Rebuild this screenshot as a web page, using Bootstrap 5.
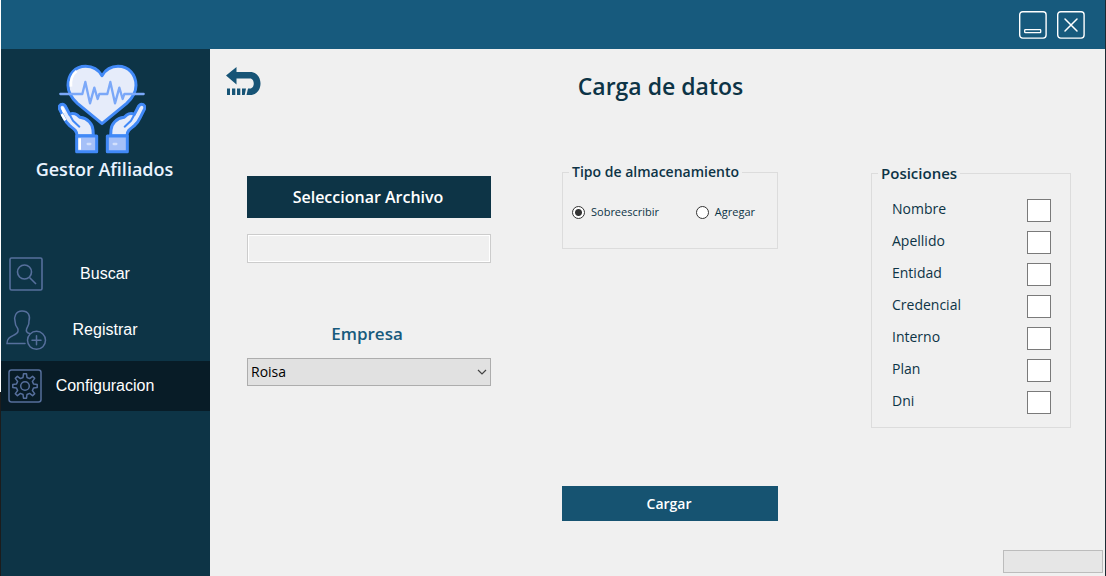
<!DOCTYPE html>
<html lang="es">
<head>
<meta charset="utf-8">
<meta name="viewport" content="width=device-width, initial-scale=1">
<title>Gestor Afiliados</title>
<link rel="stylesheet" href="https://cdn.jsdelivr.net/npm/bootstrap@5.3.0/dist/css/bootstrap.min.css">
<script src="https://cdn.jsdelivr.net/npm/bootstrap@5.3.0/dist/js/bootstrap.bundle.min.js" defer></script>
<style>
  :root { --navy: #0d3446; --blue: #175a7d; --night: #081c27; --panel: #f0f0f0; --line: #566f9c; }
  body { background: linear-gradient(#fff 392px, #1c1c1c 392px); font-family: "Open Sans", "Noto Sans", sans-serif; color: var(--navy); }
  .app { margin-left: 1px; border-right: 1px solid #1c2a33; background: var(--panel); }
  .titlebar { height: 49px; padding-right: 20px; gap: 10px; background: var(--blue); }
  .win-btn { width: 28px; height: 28px; color: #fff; }
  .sidebar { width: 209px; background: var(--navy); }
  .brand { padding: 15px 2px 68px 0; color: #e9f3ff; font-size: 18px; line-height: 24px; font-weight: 600; }
  .brand svg { margin-right: 6px; }
  .brand span { margin-top: 3px; }
  .menu { gap: 6px; font: 16px/24px "Liberation Sans", Arial, sans-serif; }
  .menu-item { height: 50px; padding-right: 1px; color: #fff; text-decoration: none; }
  .menu-item.active { background: var(--night); }
  .menu-item svg { width: 42px; height: 42px; top: 4px; left: 4px; color: var(--line); }
  .top-row { height: 111px; padding: 17px 16px 0; }
  .back-btn { width: 36px; height: 32px; color: #175476; top: 17px; left: 15px; }
  .page-title { font-size: 23px; line-height: 40px; font-weight: 600; padding-left: 6px; }
  .form-area { display: grid; grid-template-columns: minmax(0, 244fr) 71px minmax(0, 216fr) 93px minmax(0, 200fr); padding: 0 34px 0 37px; }
  .col-type { grid-column: 3; }
  .col-pos { grid-column: 5; padding-top: 1px; }
  .col-file { padding-top: 16px; }
  .flat { border: 0; border-radius: 0; color: #fff; font-weight: 600; padding: 0 2px 0 0; }
  .flat:hover { color: #fff; }
  .pick { height: 42px; background: var(--navy); font-size: 16px; }
  .pick:hover { background: var(--night); }
  .load { height: 35px; background: #165371; font-size: 14px; margin-top: 237px; }
  .load:hover { background: var(--blue); }
  .path-box { height: 29px; margin-top: 16px; border: 1px solid #ccc; border-radius: 0; background: var(--panel); box-shadow: inset 0 0 0 1px #fff; }
  .company { margin-top: 59px; font-size: 17px; line-height: 24px; font-weight: 600; color: var(--blue); }
  .company-select { height: 28px; margin-top: 12px; padding: 0 20px 0 3px; border: 1px solid #adadad; border-radius: 0; font-size: 14px; line-height: 26px; color: #000;
    background: #e1e1e1 url("data:image/svg+xml,%3Csvg xmlns='http://www.w3.org/2000/svg' viewBox='0 0 10 6'%3E%3Cpath d='M1 1l4 4 4-4' fill='none' stroke='%23444' stroke-width='1.2'/%3E%3C/svg%3E") no-repeat right 3px center / 10px 6px; }
  .group { border: 1px solid #dcdcdc; padding: 0 10px; margin: 0; }
  .group legend { float: none; width: auto; margin: 0 0 0 -4px; padding: 0 3px; font-size: 14px; line-height: 24px; font-weight: 600; }
  .group .legend-lg { font-size: 15px; }
  .radios { height: 64px; margin-left: -1px; padding: 16px 12px 0 0; font-size: 11px; line-height: 24px; }
  .radios label { gap: 6px; height: 24px; }
  .radios input { appearance: none; width: 13px; height: 13px; margin: 0; border: 1px solid #333; border-radius: 50%; background: #fff; }
  .radios input:checked { background: radial-gradient(circle, #333 3px, #fff 4px); }
  .positions { gap: 9px; padding: 14px 9px 13px 10px; font-size: 14px; line-height: 20px; }
  .positions input { width: 24px; height: 23px; border: 1px solid #7a7a7a; background: #fff; padding: 0 2px; }
  .status { width: 100px; height: 23px; margin: 0 2px 3px 0; border: 1px solid #bcbcbc; border-radius: 0; background: #e6e6e6; }
</style>
</head>
<body>
<div class="app min-vh-100 d-flex flex-column">
  <header class="titlebar d-flex align-items-center justify-content-end">
    <button type="button" class="win-btn btn p-0 border-0 d-flex" aria-label="Minimizar">
      <svg width="28" height="28" viewBox="0 0 28 28" fill="none" stroke="currentColor"><rect x=".7" y=".7" width="26.4" height="26.4" rx="3" stroke-width="1.4"/><rect x="5.700" y="18.700" width="16" height="3" rx=".6" stroke-width="1.3"/></svg>
    </button>
    <button type="button" class="win-btn btn p-0 border-0 d-flex" aria-label="Cerrar">
      <svg width="28" height="28" viewBox="0 0 28 28" fill="none" stroke="currentColor"><rect x=".7" y=".7" width="26.4" height="26.4" rx="3" stroke-width="1.4"/><path d="M8 8l12 12M20 8L8 20" stroke-width="1.5" stroke-linecap="round"/></svg>
    </button>
  </header>
  <div class="d-flex flex-grow-1">
    <aside class="sidebar flex-shrink-0">
      <div class="brand d-flex flex-column align-items-center">
        <svg width="88" height="90" viewBox="174 42 264 270" stroke-linejoin="round" stroke-linecap="round" aria-hidden="true">
          <g stroke="#4189f7" stroke-width="9">
            <path fill="#e6ecfa" d="M306 77C294 57 277 49 257 49C225 49 204 73 204 106C204 128 215 145 232 160L306 221L380 160C397 145 408 128 408 106C408 73 386 49 354 49C334 49 318 57 306 77Z"/>
            <g>
              <path fill="#e6ecfa" d="M231 257C231 242 222 237 210 228C199 219 195 211 191 202L179 178C175 169 180 163 187 163C194 163 196 167 199 174L209 193C219 188 226 191 233 196L240 202C263 205 278 222 279 240L280 257Z"/>
              <path fill="none" stroke-width="6" d="M209 194L219 212L238 230"/>
              <path fill="#a5c0f8" d="M230 258H290V305H230Z"/>
            </g>
            <g transform="matrix(-1 0 0 1 612 0)">
              <path fill="#e6ecfa" d="M231 257C231 242 222 237 210 228C199 219 195 211 191 202L179 178C175 169 180 163 187 163C194 163 196 167 199 174L209 193C219 188 226 191 233 196L240 202C263 205 278 222 279 240L280 257Z"/>
              <path fill="none" stroke-width="6" d="M209 194L219 212L238 230"/>
              <path fill="#a5c0f8" d="M230 258H290V305H230Z"/>
            </g>
          </g>
          <path stroke="#fff" stroke-width="8" fill="none" stroke-linecap="butt" d="M239 265V299M186 172L193 188M185 192L196 211M230 63C216 74 211 91 213 110"/>
          <path stroke="#d3e0fc" stroke-width="7" d="M263 282H271M341 282H349"/>
          <path stroke="#7ba8f8" stroke-width="7" fill="none" d="M181 132H247L256 96L270 160L283 113L293 147L298 132H322L331 96L345 160L358 113L368 147L373 132H431"/>
        </svg>
        <span>Gestor Afiliados</span>
      </div>
      <nav class="menu d-flex flex-column">
        <a href="#" class="menu-item position-relative d-flex align-items-center justify-content-center">
          <svg class="position-absolute" viewBox="0 0 42 42" fill="none" stroke="currentColor" stroke-width="1.600"><rect x="5" y="5" width="32" height="32" rx="1.500"/><circle cx="19.500" cy="19" r="7"/><path d="M24.500 24.500L31 31"/></svg>
          Buscar</a>
        <a href="#" class="menu-item position-relative d-flex align-items-center justify-content-center">
          <svg class="position-absolute" viewBox="0 0 42 42" fill="none" stroke="currentColor" stroke-width="1.500" stroke-linecap="round"><path d="M20 34.500H2C2 29 5 28 10 25.500C13 24 14 22.500 12.700 19.500C10.500 17 10 15 10 12C9 8 10.500 2 17 2C23.500 2 25.500 7 24 12C24.500 15 23 17 21.700 19.500C20.700 22.500 22 24 24.500 24.500"/><circle cx="31.500" cy="31.300" r="9"/><path d="M27 31.300H36M31.500 26.800V35.800"/></svg>
          Registrar</a>
        <a href="#" class="menu-item active position-relative d-flex align-items-center justify-content-center" aria-current="page">
          <svg class="position-absolute" viewBox="0 0 42 42" fill="none" stroke="currentColor" stroke-width="1.500" stroke-linejoin="round"><rect x="4" y="5" width="32" height="32" rx="2.500"/><circle cx="20" cy="21" r="4.300"/><path d="M18 12.500L18.500 8.800H21.500L22 12.500L24.600 13.600L27.600 11.300L29.700 13.400L27.400 16.400L28.500 19L32.200 19.500V22.500L28.500 23L27.400 25.600L29.700 28.600L27.600 30.700L24.600 28.400L22 29.500L21.500 33.200H18.500L18 29.500L15.400 28.400L12.400 30.700L10.300 28.600L12.600 25.600L11.500 23L7.800 22.500V19.500L11.500 19L12.600 16.400L10.300 13.400L12.400 11.300L15.400 13.600Z"/></svg>
          Configuracion</a>
      </nav>
    </aside>
    <main class="flex-grow-1 d-flex flex-column">
      <div class="top-row position-relative text-center">
        <button type="button" class="back-btn btn p-0 border-0 position-absolute d-flex" aria-label="Volver">
          <svg width="36" height="32" viewBox="0 0 36 32"><path fill="currentColor" d="M1 9.500L11.500 1V6H25C39 6 39 29 25 29H21.500L23 22.500H25C30 22.500 30 12.500 25 12.500H11.500V18.500ZM2 22.500H5V29H2ZM7 22.500H10.300V29H7ZM12 22.500H15.300V29H12ZM17 22.500H21L19.700 29H17Z"/></svg>
        </button>
        <h1 class="page-title m-0">Carga de datos</h1>
      </div>
      <form class="form-area" onsubmit="return false">
        <div class="col-file d-flex flex-column">
          <button type="button" class="btn flat pick">Seleccionar Archivo</button>
          <input type="text" class="path-box w-100" aria-label="Archivo seleccionado" readonly>
          <label for="empresa" class="company text-center pe-1">Empresa</label>
          <select id="empresa" class="form-select company-select"><option>Roisa</option></select>
        </div>
        <div class="col-type d-flex flex-column">
          <fieldset class="group">
            <legend>Tipo de almacenamiento</legend>
            <div class="radios d-flex justify-content-between">
              <label class="d-flex align-items-center"><input type="radio" name="modo" checked>Sobreescribir</label>
              <label class="d-flex align-items-center"><input type="radio" name="modo">Agregar</label>
            </div>
          </fieldset>
          <button type="submit" class="btn flat load">Cargar</button>
        </div>
        <div class="col-pos">
          <fieldset class="group">
            <legend class="legend-lg">Posiciones</legend>
            <div class="positions d-flex flex-column">
              <label class="d-flex justify-content-between">Nombre<input type="text"></label>
              <label class="d-flex justify-content-between">Apellido<input type="text"></label>
              <label class="d-flex justify-content-between">Entidad<input type="text"></label>
              <label class="d-flex justify-content-between">Credencial<input type="text"></label>
              <label class="d-flex justify-content-between">Interno<input type="text"></label>
              <label class="d-flex justify-content-between">Plan<input type="text"></label>
              <label class="d-flex justify-content-between">Dni<input type="text"></label>
            </div>
          </fieldset>
        </div>
      </form>
      <div class="status progress mt-auto ms-auto" role="progressbar" aria-label="Progreso de carga" aria-valuenow="0" aria-valuemin="0" aria-valuemax="100"></div>
    </main>
  </div>
</div>
</body>
</html>
